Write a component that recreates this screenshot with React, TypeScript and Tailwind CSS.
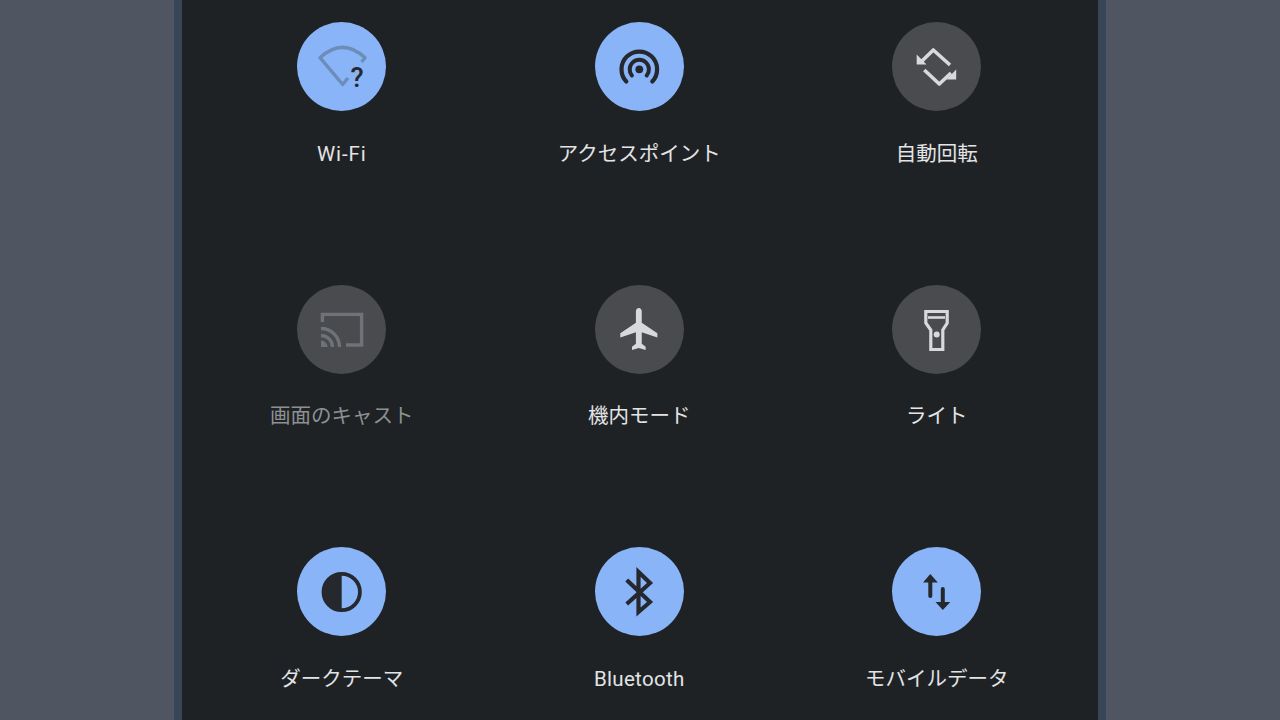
import React from "react";

const dark = "#25282c";
const light = "#d8d9da";

const WifiIcon = () => (
	<>
		<path
			d="M51 56 L45.7 62.5 L23 35.7 Q45.5 15 68 35.7 L64.5 40"
			fill="none"
			stroke="#6d8db9"
			strokeWidth="3.4"
			strokeLinejoin="round"
		/>
		<text
			x="60"
			y="65"
			textAnchor="middle"
			fontSize="27"
			fontWeight="500"
			fill={dark}
			fontFamily="Roboto, sans-serif"
		>
			?
		</text>
	</>
);

const HotspotIcon = () => (
	<>
		<circle cx="44.3" cy="47.3" r="3.9" fill={dark} />
		<path
			d="M36.9 53.5 A9.6 9.6 0 1 1 51.7 53.5"
			fill="none"
			stroke={dark}
			strokeWidth="4"
			strokeLinecap="round"
		/>
		<path
			d="M31.3 59.5 A17.8 17.8 0 1 1 57.3 59.5"
			fill="none"
			stroke={dark}
			strokeWidth="4.2"
			strokeLinecap="round"
		/>
	</>
);

const RotateIcon = () => (
	<>
		<path
			d="M58 43 L41.3 28 L30 39"
			fill="none"
			stroke={light}
			strokeWidth="3.6"
			strokeLinejoin="round"
		/>
		<path d="M24.7 32.5 V42.5 H34.5 Z" fill={light} />
		<path
			d="M32.3 48 L47.3 62 L59 51"
			fill="none"
			stroke={light}
			strokeWidth="3.6"
			strokeLinejoin="round"
		/>
		<path d="M64.2 47.5 V57.5 H54.5 Z" fill={light} />
	</>
);

const CastIcon = () => (
	<g fill="none" stroke="#6f7276" strokeWidth="3.4">
		<path d="M25.4 37 V29.4 H64.6 V60 H49" />
		<path d="M24 43.5 A18.5 18.5 0 0 1 42.5 62" />
		<path d="M24 50.5 A11.5 11.5 0 0 1 35.5 62" />
		<path d="M24 55.5 A6.5 6.5 0 0 1 30.5 62 H24 Z" fill="#6f7276" stroke="none" />
	</g>
);

const PlaneIcon = () => (
	<path
		transform="translate(21.4 18.8) scale(1.95 2.1)"
		d="M21 16v-2l-8-5V3.5c0-.83-.67-1.5-1.5-1.5S10 2.67 10 3.5V9l-8 5v2l8-2.5V19l-2 1.5V22l3.5-1 3.5 1v-1.5L13 19v-5.5l8 2.5z"
		fill={light}
	/>
);

const LightIcon = () => (
	<>
		<path
			d="M33.8 26.5 H55.2 V38 L50.8 45 V64.5 H38.8 V45 L33.8 38 Z"
			fill="none"
			stroke={light}
			strokeWidth="3.2"
		/>
		<path d="M36 32.5 H53" stroke={light} strokeWidth="2.6" />
		<circle cx="44.7" cy="49.5" r="3" fill={light} />
	</>
);

const ContrastIcon = () => (
	<>
		<circle cx="44.7" cy="45" r="18.2" fill="none" stroke={dark} strokeWidth="3.8" />
		<path d="M44.7 26 A19 19 0 0 0 44.7 64 Z" fill={dark} />
	</>
);

const BluetoothIcon = () => (
	<path
		d="M31.7 33 L55 55 L43.5 65 V25 L55 36 L31.7 57"
		fill="none"
		stroke={dark}
		strokeWidth="4.2"
	/>
);

const DataIcon = () => (
	<>
		<path d="M38.3 49 V32" stroke={dark} strokeWidth="4" strokeLinecap="round" />
		<path d="M38.3 27 L45.8 35.5 H31 Z" fill={dark} />
		<path d="M50.8 42 V58" stroke={dark} strokeWidth="4" strokeLinecap="round" />
		<path d="M50.8 63 L58.3 55 H43.5 Z" fill={dark} />
	</>
);

type Tile = {
	label: string;
	icon: React.ReactNode;
	on?: boolean;
	disabled?: boolean;
	latin?: string;
	labelTop?: string;
};

const tiles: Tile[] = [
	{ label: "Wi-Fi", icon: <WifiIcon />, on: true, latin: "tracking-[0.9px]" },
	{ label: "アクセスポイント", icon: <HotspotIcon />, on: true },
	{ label: "自動回転", icon: <RotateIcon /> },
	{ label: "画面のキャスト", icon: <CastIcon />, disabled: true, labelTop: "mt-[28px]" },
	{ label: "機内モード", icon: <PlaneIcon />, labelTop: "mt-[28px]" },
	{ label: "ライト", icon: <LightIcon />, labelTop: "mt-[28px]" },
	{ label: "ダークテーマ", icon: <ContrastIcon />, on: true },
	{ label: "Bluetooth", icon: <BluetoothIcon />, on: true, latin: "tracking-[0.3px]" },
	{ label: "モバイルデータ", icon: <DataIcon />, on: true },
];

export default function App() {
	return (
		<div className="flex w-[1280px] h-[720px] overflow-hidden bg-[#4f5661] font-['Roboto','Noto_Sans_CJK_JP',sans-serif]">
			<div className="w-[174px] bg-[#4f5661]" />
			<div className="w-[8px] bg-[#394658]" />
			<div className="w-[916px] bg-[#1f2225] pt-[22px] pl-[11px]">
				<div className="grid grid-cols-[repeat(3,297.5px)] grid-rows-[263px_262px_auto]">
					{tiles.map((tile) => (
						<div key={tile.label} className="flex flex-col items-center">
							<div
								className={`size-[89px] rounded-full ${
									tile.on ? "bg-[#8ab4f8]" : "bg-[#494b4e]"
								}`}
							>
								<svg viewBox="0 0 89 89" className="size-[89px]">
									{tile.icon}
								</svg>
							</div>
							<p
								className={`${tile.labelTop ?? "mt-[29px]"} text-[20.5px] leading-[28px] ${
									tile.latin ?? ""
								} ${tile.disabled ? "text-[#8e9093]" : "text-[#e3e4e5]"}`}
							>
								{tile.label}
							</p>
						</div>
					))}
				</div>
			</div>
			<div className="w-[8px] bg-[#394658]" />
			<div className="flex-1 bg-[#4f5661]" />
		</div>
	);
}
